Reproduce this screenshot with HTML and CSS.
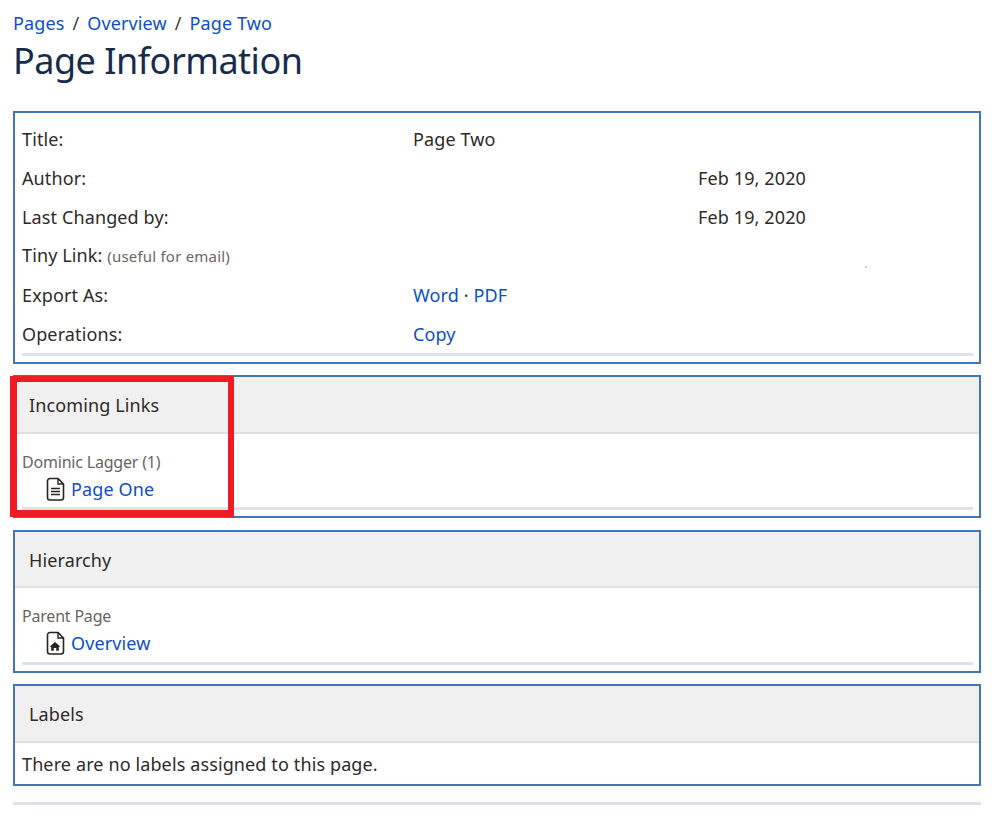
FILE: index.html
```html
<!DOCTYPE html>
<html lang="en">
<head>
<meta charset="utf-8">
<title>Page Information</title>
<link rel="stylesheet" href="styles.css">
</head>
<body>
<nav class="crumbs"><a href="#">Pages</a><span class="sep">/</span><a href="#">Overview</a><span class="sep">/</span><a href="#">Page Two</a></nav>
<h1 class="title">Page Information</h1>

<section class="panel info">
  <div class="row"><span>Title:</span><span>Page Two</span><span></span></div>
  <div class="row"><span>Author:</span><span></span><span>Feb 19, 2020</span></div>
  <div class="row"><span>Last Changed by:</span><span></span><span>Feb 19, 2020</span></div>
  <div class="row"><span>Tiny Link: <small class="hint">(useful for email)</small></span><span></span><span></span></div>
  <div class="row"><span>Export As:</span><span><a href="#">Word</a> · <a href="#">PDF</a></span><span></span></div>
  <div class="row"><span>Operations:</span><span><a href="#">Copy</a></span><span></span></div>
  <div class="rule"></div>
  <i class="speck"></i>
</section>

<section class="panel links">
  <h2 class="head">Incoming Links</h2>
  <div class="body">
    <div class="group">Dominic Lagger (1)</div>
    <div class="item">
      <svg class="icon" viewBox="0 0 20 24" width="20" height="24" aria-hidden="true"><path d="M5 1.500h8l5.500 5.500v13.500a2.500 2.500 0 0 1-2.500 2.500h-11a2.500 2.500 0 0 1-2.500-2.500v-16.500a2.500 2.500 0 0 1 2.500-2.500z" fill="#fff" stroke="#2a2320" stroke-width="1.600"/><path d="M13 1.500v5.500h5.500" fill="none" stroke="#2a2320" stroke-width="1.400"/><path d="M6 11.500h9M6 14.500h9M6 17.500h9" stroke="#2a2320" stroke-width="1.500"/></svg>
      <a href="#">Page One</a>
    </div>
    <div class="rule"></div>
  </div>
  <div class="mark"></div>
</section>

<section class="panel hierarchy">
  <h2 class="head">Hierarchy</h2>
  <div class="body">
    <div class="group">Parent Page</div>
    <div class="item">
      <svg class="icon" viewBox="0 0 20 24" width="20" height="24" aria-hidden="true"><path d="M5 1.500h8l5.500 5.500v13.500a2.500 2.500 0 0 1-2.500 2.500h-11a2.500 2.500 0 0 1-2.500-2.500v-16.500a2.500 2.500 0 0 1 2.500-2.500z" fill="#fff" stroke="#2a2320" stroke-width="1.600"/><path d="M13 1.500v5.500h5.500" fill="none" stroke="#2a2320" stroke-width="1.400"/><path d="M10 11l5.500 4.700h-1.700v4h-2.600v-2.700h-2.400v2.700h-2.600v-4h-1.700z" fill="#2a2320"/></svg>
      <a href="#">Overview</a>
    </div>
    <div class="rule"></div>
  </div>
</section>

<section class="panel labels">
  <h2 class="head">Labels</h2>
  <p class="empty">There are no labels assigned to this page.</p>
</section>

<hr class="end">
</body>
</html>
```
FILE: styles.css
```css
* { box-sizing: border-box; }
html, body { background: #fff; }
body {
  margin: 0;
  padding: 11px 18px 0 13px;
  font-family: "Noto Sans", "Open Sans", sans-serif;
  font-size: 18px;
  line-height: 24px;
  color: #2f2a28;
  letter-spacing: 0.12px;
}
a { color: #0b50c8; text-decoration: none; }
.crumbs { height: 24px; color: #403a36; }
.sep { margin: 0 8px; }
.title {
  margin: 3px 0 28px;
  font-size: 36px;
  line-height: 45px;
  font-weight: 400;
  color: #172b4d;
  letter-spacing: -0.5px;
}
.panel {
  position: relative;
  border: 2px solid #4277b5;
  background: #fff;
  margin-bottom: 11px;
}
.info { height: 253px; padding: 6px 6px 0 7px; }
.row {
  display: grid;
  grid-template-columns: 391px 285px 1fr;
  height: 39px;
  align-items: center;
}
.hint { font-size: 15px; color: #6b6560; letter-spacing: 0.2px; }
.rule { height: 3px; background: #dfe1e6; }
.speck {
  position: absolute;
  left: 850px;
  top: 153px;
  width: 2px;
  height: 2px;
  background: #cfc8e8;
}
.head {
  margin: 0;
  height: 57px;
  padding: 1px 14px 0;
  display: flex;
  align-items: center;
  background: #f0f0f0;
  border-bottom: 2px solid #dfdfdf;
  font-size: 18px;
  font-weight: 400;
  color: #2f2a28;
}
.body { padding: 15px 6px 0 7px; }
.links { height: 143px; margin-bottom: 12px; }
.hierarchy { height: 143px; }
.hierarchy .head { height: 56px; }
.group { height: 26px; padding-top: 1px; font-size: 16px; color: #6b6560; line-height: 24px; letter-spacing: -0.2px; }
.item { display: flex; align-items: center; gap: 6px; height: 28px; padding-left: 23px; }
.icon { flex: none; }
.body .rule { margin-top: 4px; }
.hierarchy .body .rule { margin-top: 5px; }
.labels { height: 102px; margin-bottom: 0; }
.empty { margin: 0; padding: 0 7px; height: 43px; line-height: 42px; }
.end { margin: 16px 0 0; border: 0; height: 3px; background: #dfe1e6; width: 968px; }
.mark {
  position: absolute;
  left: -5px;
  top: -1px;
  width: 224px;
  height: 141px;
  border-style: solid;
  border-color: #ee1c25;
  border-width: 6px 6px 7px 7px;
}
```
